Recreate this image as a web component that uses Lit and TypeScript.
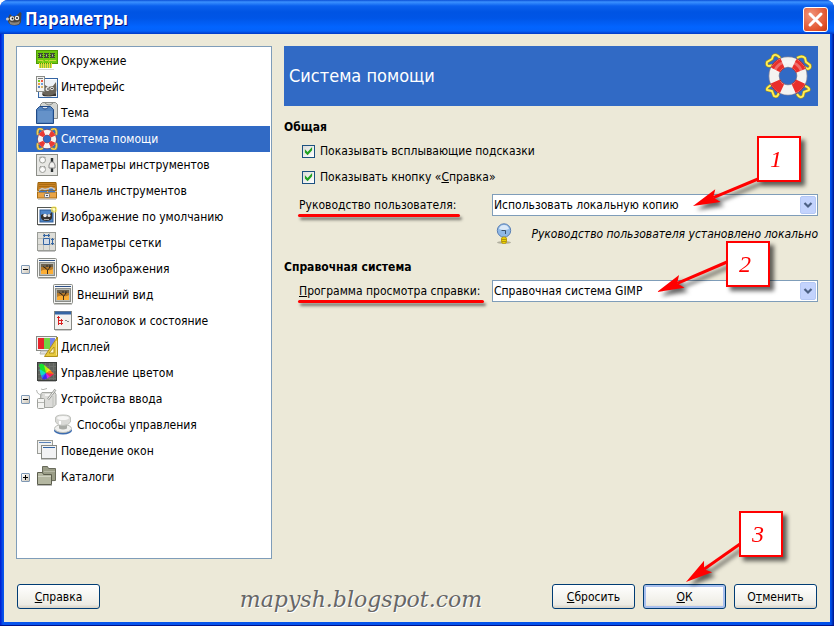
import { LitElement, html, svg, css, nothing, type TemplateResult, type SVGTemplateResult } from "lit";
import { customElement, property, state } from "lit/decorators.js";
import { classMap } from "lit/directives/class-map.js";

/* ---------- icon artwork, drawn on a 22 x 22 grid ---------- */

const lifebuoy = svg`
  <path d="M7 2Q3-.5 2 2t0 5M15 2q4-2.500 5 0t0 5M7 20q-4 2.500-5 0t0-5M15 20q4 2.500 5 0t0-5" fill="none" stroke="#c9a227" stroke-width="2.400"/>
  <path d="M7 2Q3-.5 2 2t0 5M15 2q4-2.500 5 0t0 5M7 20q-4 2.500-5 0t0-5M15 20q4 2.500 5 0t0-5" fill="none" stroke="#f6dd7a" stroke-width="1"/>
  <circle cx="11" cy="11" r="6.700" fill="none" stroke="#a3403c" stroke-width="6"/>
  <circle cx="11" cy="11" r="6.700" fill="none" stroke="#f6f4f0" stroke-width="5"/>
  <circle cx="11" cy="11" r="6.700" fill="none" stroke="#ea3a34" stroke-width="5" stroke-dasharray="4.800 5.724" stroke-dashoffset="-2.862"/>`;

const picture = svg`
  <rect x="1.500" y=".5" width="19" height="19" rx="1" fill="#f6f6f4" stroke="#8b8d88"/>
  <path d="M3 2.500h16" stroke="#2c4f86"/>
  <rect x="3.500" y="4.500" width="15" height="13" fill="#b9bbb6" stroke="#8b8d88"/>
  <rect x="5" y="6" width="12" height="10" fill="#b5792a"/>
  <path d="M5 6h12v3H5z" fill="#6e6350"/>
  <path d="M5 13q3-2 6-1t6-1v5H5z" fill="#fcae35"/>
  <path d="M11.500 16v-4L9 9.500M11.500 12.500l3-4M11 9V7M7 8.500l3 2M14 7l-.5 3" stroke="#2e2418" stroke-width=".9" fill="none"/>
  <path d="M2 20.500h18" stroke="#c9c9c6"/>`;

const art: Record<string, SVGTemplateResult> = {
  memory: svg`
    <rect x=".5" y=".5" width="21" height="13" fill="#6cc80e" stroke="#4e9a06"/>
    <path d="M3 14h13v4H3z" fill="#8cc63a"/>
    <path d="M3.500 13v5M5.500 13v5M7.500 13v5M9.500 13v5M11.500 13v5M13.500 13v5M15.500 13v5" stroke="#f2dc3e"/>
    <path d="M2 10.500h5v2M20 10.500h-7v2M9 10.500h3" stroke="#c9dc3c" fill="none"/>
    <path d="M3 3h3v5H3zM9 3h3v5H9zM15 3h3v5h-3z" fill="#3f4a38"/>
    <path d="M2 3.500h1M2 5.500h1M2 7.500h1M6 3.500h1M6 5.500h1M6 7.500h1M8 3.500h1M8 5.500h1M8 7.500h1M12 3.500h1M12 5.500h1M12 7.500h1M14 3.500h1M14 5.500h1M14 7.500h1M18 3.500h1M18 5.500h1M18 7.500h1" stroke="#33402a"/>
    <path d="M4 4.500h1v2H4zM10 4.500h1v2h-1zM16 4.500h1v2h-1z" fill="#b9c4a8"/>
    <path d="M2 19.500h16" stroke="#d8d8d8"/>`,
  interface: svg`
    <rect x="2.500" y="2.500" width="19" height="19" fill="#eef2f8" stroke="#3465a4"/>
    <path d="M9 3.500h12" stroke="#fff"/>
    <path d="M7 12l2-3 3 2 5-1 3-4 .5 8q-.5 6-6.500 6.500T6 19z" fill="#6a645a"/>
    <path d="M7 18q6 4 13-1v3H7z" fill="#3c3833"/>
    <circle cx="11.500" cy="13" r="2" fill="#eee"/><circle cx="16" cy="12.500" r="1.800" fill="#eee"/>
    <circle cx="12" cy="13" r=".8" fill="#111"/><circle cx="16" cy="12.500" r=".8" fill="#111"/>
    <rect x=".5" y=".5" width="8" height="15" fill="#f3f3f1" stroke="#8b8d88"/>
    <path d="M2 2.500h5" stroke="#777"/>
    <path d="M2 4h2v2H2z" fill="#73d216"/><path d="M5 4h2v2H5z" fill="#ef5d48"/>
    <path d="M2 7h2v2H2z" fill="#f0a03c"/><path d="M5 7h2v2H5z" fill="#74a0dc"/>
    <path d="M2 10h2v2H2z" fill="#5c86c8"/><path d="M5 10h2v2H5z" fill="#d8b46c"/>`,
  theme: svg`
    <path d="M4.500 2.500l2-2h13l2 2v14h-17z" fill="#d3d5d1" stroke="#8a8c88"/>
    <path d="M9 1q4 4 8 0" fill="none" stroke="#888a85"/>
    <path d="M.5 7.500l3-3h11l3 3v14H.5z" fill="#5484bf" stroke="#204a87"/>
    <path d="M2 9h14v11H2z" fill="#6592c9"/>
    <path d="M5.500 5q3.500 4 7 0" fill="#dfe7f1" stroke="#204a87"/>`,
  help: lifebuoy,
  toolOptions: svg`
    <rect x=".5" y=".5" width="21" height="21" fill="#e7e7e4" stroke="#8b8d88"/>
    <circle cx="6.500" cy="6" r="3" fill="#fafafa" stroke="#9a9c97"/>
    <circle cx="6.500" cy="15.500" r="3" fill="#fafafa" stroke="#9a9c97"/>
    <path d="M3.500 4L5 2.500M9.500 4L8 2.500M3.500 13.500L5 12M9.500 13.500L8 12" stroke="#999"/>
    <path d="M16 4v14" stroke="#2e3436" stroke-width="2.400"/>
    <path d="M14.500 8h3l1.500 3v3h-6v-3z" fill="#f2f2f0" stroke="#888"/>`,
  toolbox: svg`
    <path d="M2 2.500h18l.5 8h-19z" fill="#c98223" stroke="#9c640c"/>
    <path d="M3 4.500h16M3 6.500h16" stroke="#ac6c12"/>
    <rect x="1.500" y="12" width="19" height="6" fill="#e9a446" stroke="#a86d14"/>
    <path d="M3 10.500l3-2 3 1 4-1 2-1 4 2" stroke="#c4c9d0" stroke-width="1.500" fill="none"/>
    <path d="M3 11.500h8M12 11.500h7M13 9.500h4" stroke="#3f78c4" stroke-width="1.500"/>
    <rect x="8.500" y="13.500" width="5" height="4" rx="1" fill="#eee" stroke="#777"/>
    <path d="M10 15.500h2" stroke="#555"/>
    <path d="M2 19.500h18" stroke="#ccc"/>`,
  newImage: svg`
    <rect x="1.500" y="1.500" width="18" height="17" fill="#fff" stroke="#555753"/>
    <rect x="4" y="4" width="13" height="12" fill="#4f86c8" stroke="#2f5c98"/>
    <path d="M5 9l2-1 3 1 4-1 2-2v6q-1 3-5.500 3T5 12z" fill="#36322e"/>
    <circle cx="9" cy="9.500" r="1.800" fill="#eee"/><circle cx="13" cy="9.500" r="1.500" fill="#ddd"/>
    <path d="M8 13.500h5" stroke="#aaa"/>
    <circle cx="18" cy="3.500" r="3.200" fill="#fce94f" opacity=".7"/>
    <circle cx="18" cy="3.500" r="1.300" fill="#fffbd0"/>
    <path d="M2 19.500h18" stroke="#c4c4c4"/>`,
  grid: svg`
    <rect x="1.500" y=".5" width="18" height="18" fill="#deded9" stroke="#9a9c97"/>
    <path d="M2 6.500h17M2 12.500h17M7.500 1v17M13.500 1v17" stroke="#b9bbb6"/>
    <path d="M7.500 6.500h6v6h-6z" fill="#d3dbe6" stroke="#3465a4"/>
    <path d="M7 3.500h7M8.500 2v3M12.500 2v3M16.500 6v7M15 7.500h3M15 11.500h3" stroke="#3465a4"/>
    <path d="M2 19.500h17" stroke="#c4c4c4"/>`,
  imageWindow: picture,
  appearance: picture,
  titleStatus: svg`
    <rect x="2.500" y="1.500" width="17" height="18" fill="#f1f1ef" stroke="#888a85"/>
    <path d="M3 3h16" stroke="#3465a4" stroke-width="3"/>
    <path d="M6.500 6v9M5 7.500h3M7 10.500h4M7 13.500h4M9.500 9v3M9.500 12v3" stroke="#d82020" fill="none"/>
    <path d="M13 10.500h2M15 11.500h2" stroke="#888"/>
    <path d="M3 20.500h16" stroke="#ccc"/>`,
  display: svg`
    <rect x=".5" y=".5" width="20" height="14" fill="#f2f2f0" stroke="#888a85"/>
    <path d="M2 2h6v11H2z" fill="#e8232b"/><path d="M8 2h6v11H8z" fill="#72d444"/><path d="M14 2h5v11h-5z" fill="#7482ea"/>
    <path d="M5 15h7l-1 3H4z" fill="#e4e4e2" stroke="#b8bab5"/>
    <path d="M21.500 1v19.500H8.500z" fill="#e6c83c" stroke="#b0901a"/>
    <path d="M18 11v6h-5z" fill="#fff8d0" stroke="#b0901a"/>
    <path d="M20.500 5v14" stroke="#f7e58a"/>`,
  color: svg`
    <rect x="1.500" y=".5" width="19" height="18" fill="#60635e" stroke="#3c3f3c"/>
    <path d="M2 4.500h18M2 8.500h18M2 12.500h18M2 16.500h18M5.500 1v17M9.500 1v17M13.500 1v17M17.500 1v17" stroke="#6f726d"/>
    <path d="M3 3q1-2 4-1l2 2 1 7-5-1z" fill="#18e030"/>
    <path d="M3.500 7l6.500 4-4 4q-2-3-2.500-8z" fill="#12dcc0"/>
    <path d="M10 11l-3 6-2-3z" fill="#2a78ff"/>
    <path d="M10 11l2 5-3 1.500-3-.5z" fill="#3a2af0"/>
    <path d="M10 11l5 3-4 2.500z" fill="#d428e8"/>
    <path d="M10 11l8 1-4 3z" fill="#ff2050"/>
    <path d="M8 3l5 4-3 4z" fill="#b4f010"/>
    <path d="M12 6.500l3 2-5 2.500z" fill="#ffe010"/>
    <path d="M14.500 8.500L18 12l-8-1z" fill="#ff7a10"/>
    <path d="M2 19.500h18" stroke="#bbb"/>`,
  devices: svg`
    <path d="M4.500 6.500L6 4.500h13l1 2v10l-3 3H4.500z" fill="#dcdcd9" stroke="#a6a8a3"/>
    <path d="M17 8v11" stroke="#bfc1bc"/>
    <path d="M.5 2l1 3q2 2 5 2M5 1q1 1.500 6-.5" fill="none" stroke="#b5b7b3"/>
    <path d="M9 7h8" stroke="#f6f6f4" stroke-width="2"/>
    <path d="M12 11.500l7.500-10" stroke="#9a9c97" stroke-width="2.400"/>
    <path d="M12 11.500l7.500-10" stroke="#f1f1ef"/>
    <rect x="1.500" y="10.500" width="7" height="10" rx="1" fill="#f4f4f2" stroke="#a0a29d"/>
    <path d="M5 10V7M2 14.500h6" stroke="#b6b8b3" fill="none"/>`,
  controller: svg`
    <ellipse cx="11" cy="16.500" rx="9" ry="4" fill="#3c6cb0"/>
    <ellipse cx="11" cy="14.500" rx="8.500" ry="4" fill="#f0f0ee" stroke="#bcbeb9"/>
    <path d="M7 10h8v4.500q-4 2-8 0z" fill="#a9aba6"/>
    <path d="M3.500 4q0-3 7.500-3t7.500 3v4q-2 3.500-7.500 3.500T3.500 8z" fill="#dadad7" stroke="#c0c2bd"/>
    <ellipse cx="11" cy="4" rx="6" ry="2" fill="#f7f7f6"/>
    <path d="M8 7v3.500" stroke="#fff" stroke-width="2"/>`,
  windows: svg`
    <rect x="1.500" y=".5" width="15" height="13" fill="#f1f1ef" stroke="#9a9c97"/>
    <path d="M3 2.500h12" stroke="#5b82b8"/>
    <rect x="5.500" y="5.500" width="15" height="13" fill="#f2f2f4" stroke="#888a85"/>
    <path d="M7 7.500h12" stroke="#3465a4"/>
    <path d="M5 19.500h16" stroke="#c8c8c8"/>`,
  folders: svg`
    <path d="M6.500 15V.5h5l1 2h7v12z" fill="#9a9d87" stroke="#686a5a"/>
    <path d="M8 5.500h11" stroke="#b6b8a6"/>
    <path d="M1.500 18.500V6.500h5l1 2h8v10z" fill="#b4b7a1" stroke="#5c5e4e"/>
    <path d="M2 10.500h13" stroke="#d0d2c2"/>
    <path d="M1 19.500h15" stroke="#bbb"/>`,
  bulb: svg`
    <ellipse cx="11" cy="19.500" rx="7" ry="1.500" fill="#8a887c" opacity=".6"/>
    <circle cx="11" cy="7.500" r="6.700" fill="#8fb8e6" stroke="#5a7fb3"/>
    <path d="M6 6q1-4 5-4t5 4q-5 2-10 0z" fill="#dbe9f8"/>
    <path d="M8.500 7.500h4v2M12.500 8v3" stroke="#3a536f" fill="none"/>
    <rect x="8.500" y="14" width="5" height="6.500" rx="2" fill="#edd400" stroke="#b89a10"/>
    <path d="M8.500 16.500h5M8.500 18.500h5" stroke="#b09410"/>`,
};

@customElement("pref-icon")
class PrefIcon extends LitElement {
  @property() name = "";

  static styles = css`
    :host { display: block; flex: none; width: 22px; height: 22px; }
    .art { display: block; width: 100%; height: 100%; }
  `;

  render() {
    return html`<svg class="art" viewBox="0 0 22 22" aria-hidden="true">${art[this.name] ?? nothing}</svg>`;
  }
}

/* A numbered marker: a framed digit with an arrow that leaves its left edge
   at height "from" and runs "reach" to the left and "drop" down. */
@customElement("step-marker")
class StepMarker extends LitElement {
  @property() step = "";
  @property({ type: Number }) from = 30;
  @property({ type: Number }) reach = 70;
  @property({ type: Number }) drop = 30;

  static styles = css`
    :host { display: block; position: absolute; pointer-events: none; filter: drop-shadow(4px 4px 2px rgba(0, 0, 0, 0.6)); }
    .box {
      box-sizing: border-box; width: 44px; height: 46px; border: 2px solid #f00; background: #fff;
      display: flex; align-items: center; justify-content: center; padding-right: 6px;
      font: italic 24px/24px "Liberation Serif", serif; color: #f00;
    }
    .arrow { position: absolute; right: 42px; top: 0; overflow: visible; width: 1px; height: 1px; }
  `;

  render() {
    const angle = (Math.atan2(this.drop, -this.reach) * 180) / Math.PI;
    const length = Math.hypot(this.reach, this.drop);
    return html`
      <svg class="arrow" aria-hidden="true">
        <g transform="translate(0 ${this.from}) rotate(${angle})">
          <path d="M0 0H${length - 22}" stroke="#f00" stroke-width="3"/>
          <path d="M${length} 0l-27 -7 5 7-5 7z" fill="#f00"/>
        </g>
      </svg>
      <div class="box">${this.step}</div>
    `;
  }
}

interface Node {
  id: string;
  label: string;
  children?: Node[];
}

const nodes: Node[] = [
  { id: "memory", label: "Окружение" },
  { id: "interface", label: "Интерфейс" },
  { id: "theme", label: "Тема" },
  { id: "help", label: "Система помощи" },
  { id: "toolOptions", label: "Параметры инструментов" },
  { id: "toolbox", label: "Панель инструментов" },
  { id: "newImage", label: "Изображение по умолчанию" },
  { id: "grid", label: "Параметры сетки" },
  {
    id: "imageWindow",
    label: "Окно изображения",
    children: [
      { id: "appearance", label: "Внешний вид" },
      { id: "titleStatus", label: "Заголовок и состояние" },
    ],
  },
  { id: "display", label: "Дисплей" },
  { id: "color", label: "Управление цветом" },
  { id: "devices", label: "Устройства ввода", children: [{ id: "controller", label: "Способы управления" }] },
  { id: "windows", label: "Поведение окон" },
  { id: "folders", label: "Каталоги", children: [] },
];

@customElement("category-tree")
class CategoryTree extends LitElement {
  @state() private selected = "help";
  @state() private open = new Set(["imageWindow", "devices"]);

  static styles = css`
    :host {
      display: block; box-sizing: border-box; width: 256px; flex: none;
      background: #fff; border: 1px solid #7f9db9; padding: 1px;
    }
    ul { list-style: none; margin: 0; padding: 0; }
    .row { display: flex; align-items: center; height: 26px; padding-left: 3px; cursor: default; white-space: nowrap; }
    .row.child { padding-left: 19px; }
    .row.selected { background: #316ac5; color: #fff; }
    .slot { flex: none; width: 9px; height: 9px; margin-right: 6px; }
    .toggle {
      display: block; box-sizing: border-box; width: 9px; height: 9px; padding: 0;
      border: 1px solid #7f98b4; border-radius: 1px; background: linear-gradient(135deg, #fff, #cdc6b8);
    }
    .sign { display: block; width: 7px; height: 7px; }
    .row pref-icon { margin-right: 3px; }
  `;

  private toggle(id: string) {
    const next = new Set(this.open);
    if (!next.delete(id)) next.add(id);
    this.open = next;
  }

  private row(node: Node, child: boolean): TemplateResult {
    const open = this.open.has(node.id);
    return html`
      <li role="treeitem" aria-selected=${this.selected === node.id}>
        <div
          class=${classMap({ row: true, child, selected: this.selected === node.id })}
          @click=${() => (this.selected = node.id)}
        >
          <span class="slot">
            ${node.children
              ? html`<button class="toggle" aria-label=${node.label} aria-expanded=${open} @click=${() => this.toggle(node.id)}>
                  <svg class="sign" viewBox="0 0 7 7"><path d=${open ? "M1 3.5h5" : "M1 3.5h5M3.5 1v5"} stroke="#000" /></svg>
                </button>`
              : nothing}
          </span>
          <pref-icon name=${node.id}></pref-icon>
          <span>${node.label}</span>
        </div>
        ${open && node.children ? html`<ul role="group">${node.children.map((c) => this.row(c, true))}</ul>` : nothing}
      </li>
    `;
  }

  render() {
    return html`<ul role="tree" aria-label="Категории">${nodes.map((n) => this.row(n, false))}</ul>`;
  }
}

@customElement("app-root")
class AppRoot extends LitElement {
  static styles = css`
    :host {
      display: block; color: #000;
      font: 12px/16px "DejaVu Sans Condensed", "DejaVu Sans", sans-serif; font-stretch: condensed;
    }
    .window {
      box-sizing: border-box; min-height: 100vh; display: flex; flex-direction: column;
      background: linear-gradient(90deg, #0019cf, #0855ec 3px, #0050ea calc(100% - 3px), #00138c);
      border-bottom: 1px solid #00138c; border-radius: 8px 8px 0 0; overflow: hidden;
    }
    .titlebar {
      box-sizing: border-box; height: 34px; display: flex; align-items: center; padding: 4px 6px 0;
      background: linear-gradient(#0a4fd6, #3b91ff 2px, #0a60ee 6px, #0054e3 12px, #0055e6 18px, #0264ff 27px, #0462fa 31px, #0138c4);
    }
    .logo { width: 16px; height: 16px; flex: none; }
    .caption {
      flex: 1; margin: 0; padding-left: 3px; font: bold 17px/22px "Open Sans", sans-serif;
      color: #fff; text-shadow: 1px 1px 0 #0a1883;
    }
    .close {
      width: 25px; height: 25px; padding: 0; border: 1px solid #fff; border-radius: 3px;
      background: radial-gradient(circle at 30% 30%, #f0957c, #e2532c 70%, #c33a10);
    }
    .close svg { display: block; width: 23px; height: 23px; }
    .body {
      flex: 1; display: flex; flex-direction: column; gap: 25px; margin: 0 4px 3px;
      padding: 12px 12px 13px; background: #ece9d8;
    }
    .columns { flex: 1; display: flex; gap: 12px; }
    .panel { flex: 1; position: relative; min-width: 0; }
    .banner {
      height: 60px; display: flex; align-items: center; justify-content: space-between;
      padding: 0 6px 0 5px; background: #316ac5; color: #fff;
    }
    .banner h2 { margin: 0; font-size: 18px; line-height: 20px; font-weight: normal; }
    .banner-icon { width: 48px; height: 48px; }
    .section { margin-top: 12px; }
    .section h3 { margin: 0; font-size: 12px; line-height: 18px; font-weight: bold; }
    .check { display: flex; align-items: center; gap: 5px; height: 26px; padding-left: 18px; }
    .check input {
      appearance: none; box-sizing: border-box; width: 13px; height: 13px; margin: 0; display: grid; place-items: center;
      border: 1px solid #1c5180; background: linear-gradient(135deg, #dcdcd7, #fff);
    }
    .check input:checked::before {
      content: ""; width: 9px; height: 9px; background: #21a121;
      clip-path: polygon(10% 30%, 40% 60%, 90% 5%, 90% 42%, 40% 98%, 10% 68%);
    }
    .checks { padding-top: 2px; padding-bottom: 4px; }
    .field { display: flex; align-items: center; justify-content: space-between; padding-left: 15px; }
    .field.second { margin-top: 4px; }
    .name { position: relative; white-space: nowrap; }
    .name::after {
      content: ""; position: absolute; left: -1px; right: -4px; top: 17px; height: 3px;
      border-radius: 2px; background: #f00; box-shadow: 2px 3px 3px rgba(0, 0, 0, 0.5);
    }
    .combo { position: relative; width: 326px; flex: none; }
    .combo select {
      appearance: none; display: block; box-sizing: border-box; width: 100%; height: 22px; padding: 0 20px 0 1px;
      border: 1px solid #7f9db9; border-radius: 0; background: #fff; color: #000; font: inherit;
    }
    .drop { position: absolute; right: 2px; top: 2px; width: 16px; height: 18px; pointer-events: none; }
    .hint {
      display: flex; align-items: center; justify-content: space-between; box-sizing: border-box;
      width: 326px; height: 24px; margin: 6px 0 0 auto; padding-left: 1px; font-style: italic; white-space: nowrap;
    }
    .footer { position: relative; display: flex; align-items: center; gap: 8px; padding: 0 1px; }
    .sign {
      flex: 1; text-align: center; padding-left: 70px; height: 25px;
      font: italic 22px/32px "DejaVu Serif", serif; color: #666; text-shadow: 1px 1px 0 #fff;
    }
    .btn {
      box-sizing: border-box; width: 83px; height: 25px; padding: 0; border: 1px solid #003c74; border-radius: 3px;
      background: linear-gradient(#fff, #f3f2ec 60%, #ecebe4 85%, #d8d2c5); font: inherit; color: #000;
    }
    .btn.primary { box-shadow: inset 0 0 0 2px #a9c0ee; }
    .first { right: 17px; top: 90px; }
    .two { right: 48px; top: 195px; }
    .three { right: 35px; bottom: 52px; }
  `;

  private dropArrow() {
    return html`<svg class="drop" viewBox="0 0 16 18" aria-hidden="true">
      <rect x=".5" y=".5" width="15" height="17" rx="1.500" fill="#c3d3fd" stroke="#b5c8f5" />
      <path d="M4.500 7l3.500 3.500L11.500 7" fill="none" stroke="#4d6185" stroke-width="2.200" />
    </svg>`;
  }

  render() {
    return html`
      <div class="window">
        <header class="titlebar">
          <svg class="logo" viewBox="0 0 16 16" aria-hidden="true">
            <path d="M2 7l2-4 2 2h4l4-4 1.500 1-.5 9q-1 3.500-6 3.500-6 0-7-4z" fill="#4a453f" />
            <path d="M3 10q5 3 11 0l-1 3q-5 2-9 0z" fill="#8a857c" />
            <circle cx="1.500" cy="8" r="1.500" fill="#c8c8c8" />
            <circle cx="6" cy="7.500" r="2.200" fill="#f2f2f2" /><circle cx="11" cy="7" r="2.200" fill="#f2f2f2" />
            <circle cx="6.500" cy="7.500" r=".9" fill="#111" /><circle cx="11" cy="7" r=".9" fill="#111" />
          </svg>
          <h1 class="caption">Параметры</h1>
          <button class="close" aria-label="Закрыть">
            <svg viewBox="0 0 23 23"><path d="M6 6l11 11M17 6L6 17" stroke="#fff" stroke-width="3" stroke-linecap="round" /></svg>
          </button>
        </header>
        <main class="body">
          <div class="columns">
            <category-tree></category-tree>
            <section class="panel">
              <div class="banner">
                <h2>Система помощи</h2>
                <svg class="banner-icon" viewBox="0 0 48 48" aria-hidden="true">
                  <path d="M16 6Q12 1 9 4L8 7 3 10q-1 4 2 4l7-1M33 6q5-3 8 0l1 4 4 3q1 3-2 4l-6-3M7 33q-5 3-4 5l5 1 2 5q4 2 5-4M41 34q5 2 4 4l-5 2-1 4q-3 3-6-2" fill="none" stroke="#b59a10" stroke-width="3" />
                  <path d="M16 6Q12 1 9 4L8 7 3 10q-1 4 2 4l7-1M33 6q5-3 8 0l1 4 4 3q1 3-2 4l-6-3M7 33q-5 3-4 5l5 1 2 5q4 2 5-4M41 34q5 2 4 4l-5 2-1 4q-3 3-6-2" fill="none" stroke="#fff05a" stroke-width="1.800" />
                  <circle cx="24" cy="24" r="14" fill="none" stroke="#85859a" stroke-width="11" />
                  <circle cx="24" cy="24" r="14" fill="none" stroke="#b42220" stroke-width="11" stroke-dasharray="10 11.990" stroke-dashoffset="-5.995" />
                  <circle cx="24" cy="24" r="14" fill="none" stroke="#f4f3f1" stroke-width="9.400" />
                  <circle cx="24" cy="24" r="14" fill="none" stroke="#e92f2b" stroke-width="9.400" stroke-dasharray="10 11.990" stroke-dashoffset="-5.995" />
                  <path d="M10.500 19A14.500 14.500 0 0 1 37.500 19" fill="none" stroke="#fff" stroke-width="3" opacity=".3" />
                </svg>
              </div>
              <div class="section">
                <h3>Общая</h3>
                <div class="checks">
                  <label class="check"><input type="checkbox" checked /><span>Показывать всплывающие по<u>д</u>сказки</span></label>
                  <label class="check"><input type="checkbox" checked /><span>Показывать кнопку «<u>С</u>правка»</span></label>
                </div>
                <div class="field">
                  <label class="name" for="manual">Руководство пользователя:</label>
                  <div class="combo">
                    <select id="manual"><option>Использовать локальную копию</option></select>
                    ${this.dropArrow()}
                  </div>
                </div>
                <div class="hint"><pref-icon name="bulb"></pref-icon><span>Руководство пользователя установлено локально</span></div>
              </div>
              <div class="section">
                <h3>Справочная система</h3>
                <div class="field second">
                  <label class="name" for="viewer"><u>П</u>рограмма просмотра справки:</label>
                  <div class="combo">
                    <select id="viewer"><option>Справочная система GIMP</option></select>
                    ${this.dropArrow()}
                  </div>
                </div>
              </div>
              <step-marker class="first" step="1" from="43" reach="65" drop="27"></step-marker>
              <step-marker class="two" step="2" from="21" reach="70" drop="30"></step-marker>
            </section>
          </div>
          <footer class="footer">
            <button class="btn"><u>С</u>правка</button>
            <div class="sign">mapysh.blogspot.com</div>
            <button class="btn"><u>С</u>бросить</button>
            <button class="btn primary"><u>О</u>К</button>
            <button class="btn">О<u>т</u>менить</button>
            <step-marker class="three" step="3" from="33" reach="54" drop="38"></step-marker>
          </footer>
        </main>
      </div>
    `;
  }
}
